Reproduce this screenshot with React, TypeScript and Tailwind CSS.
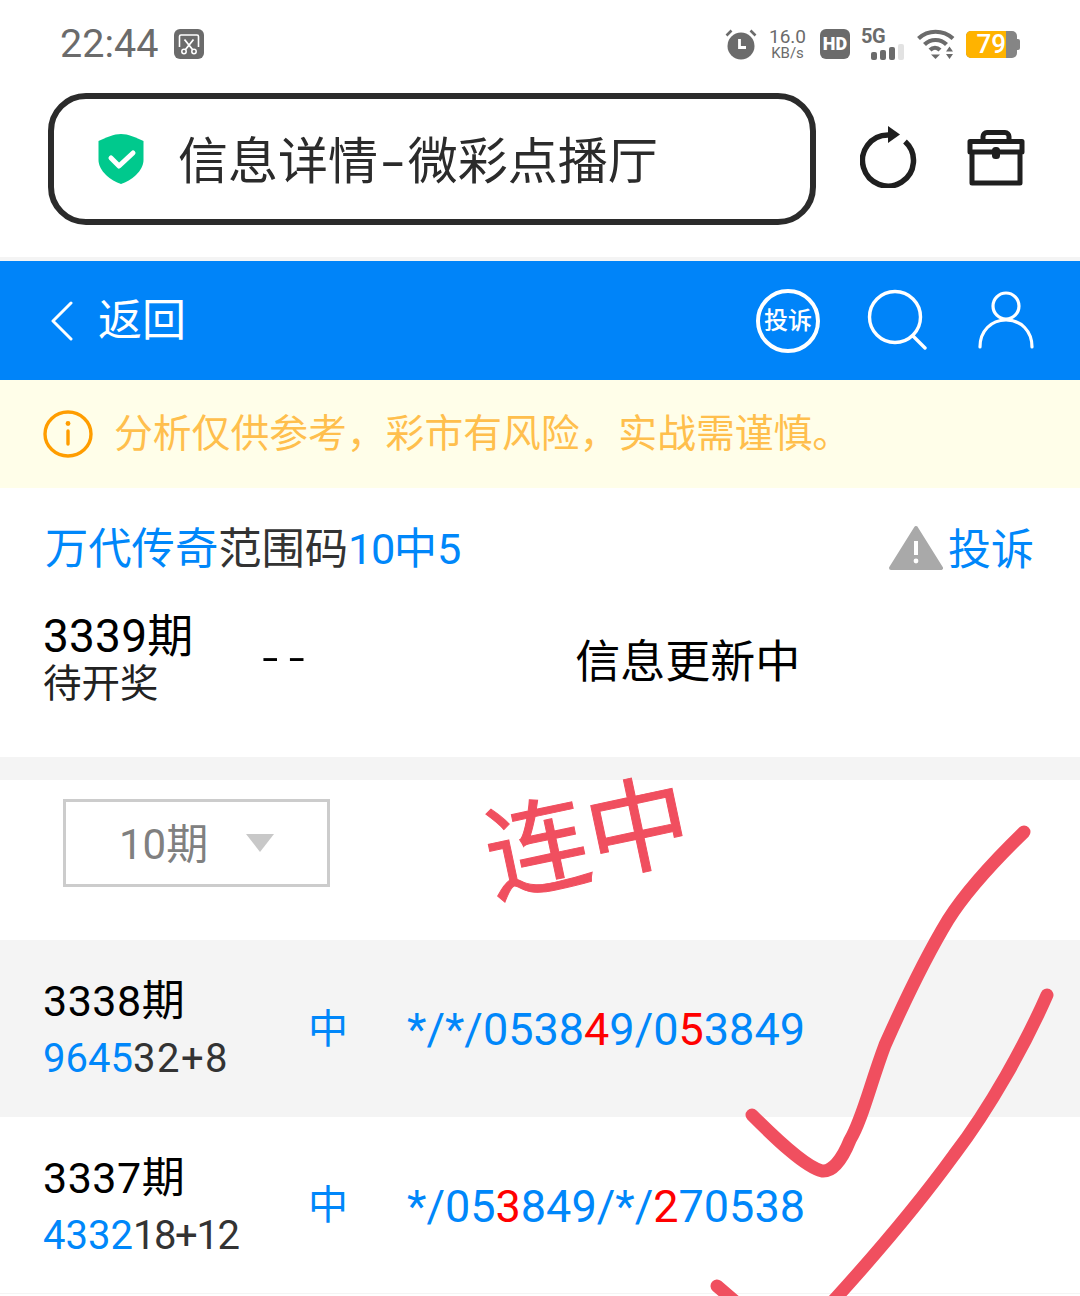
const FONT = 'font-["Roboto","Noto_Sans_CJK_SC",sans-serif]';

// ── Icons ──────────────────────────────────────────────
const Shot = () => (
  <svg width="30" height="30" viewBox="0 0 30 30">
    <rect width="30" height="30" rx="6" fill="#6b6b6b" />
    <path d="M5.500 18V7.500A1.500 1.500 0 0 1 7 6h16A1.500 1.500 0 0 1 24.500 7.500V18" fill="none" stroke="#fff" strokeWidth="1.600" />
    <path d="M10.500 10.500l8 10M19.500 10.500l-8 10" stroke="#fff" strokeWidth="1.800" fill="none" />
    <circle cx="10" cy="22.500" r="2.200" fill="none" stroke="#fff" strokeWidth="1.500" />
    <circle cx="20" cy="22.500" r="2.200" fill="none" stroke="#fff" strokeWidth="1.500" />
  </svg>
);

const Alarm = () => (
  <svg width="32" height="32" viewBox="0 0 32 32" fill="#6b6b6b">
    <circle cx="16" cy="18" r="13.500" />
    <path d="M1.500 7.500L6.500 2.500M30.500 7.500L25.500 2.500" stroke="#6b6b6b" strokeWidth="2.600" />
    <path d="M14.500 11v8.500H21" fill="none" stroke="#fff" strokeWidth="2.800" />
  </svg>
);

const Signal = () => (
  <div className="flex flex-col">
    <span className="text-[20px] leading-[17px] font-bold text-[#6b6b6b] tracking-[-0.5px]">5G</span>
    <div className="flex items-end gap-[3px] ml-[10px] mt-[-1px]">
      <span className="w-[6px] h-[8px] rounded-[2px] bg-[#6b6b6b]" />
      <span className="w-[6px] h-[10px] rounded-[2px] bg-[#6b6b6b]" />
      <span className="w-[6px] h-[13px] rounded-[2px] bg-[#6b6b6b]" />
      <span className="w-[6px] h-[16px] rounded-[2px] bg-[#e2e2e2]" />
    </div>
  </div>
);

const Wifi = () => (
  <svg width="38" height="30" viewBox="0 0 38 30" fill="none" stroke="#6b6b6b" strokeWidth="4.200">
    <path d="M1.500 9.500C11 .5 26 .5 36 9.500" />
    <path d="M7.500 15.500C13.500 9.500 23.500 9.500 29.500 15.500" />
    <path d="M13 21C16 18 20 18 23 21" />
    <path d="M14 25.500h9L18.500 30z" fill="#6b6b6b" stroke="none" />
    <path d="M32.500 17.500l3.500 5h-7zM32.500 30l3.500-5h-7z" fill="#6b6b6b" stroke="none" />
  </svg>
);

const Battery = () => (
  <div className="flex items-center">
    <div className="w-[51px] h-[27px] rounded-[5px] overflow-hidden flex bg-[#858585]">
      <div className="w-[40px] bg-[#ffb300] flex items-center justify-end">
        <span className="text-[26px] leading-none font-medium text-white">79</span>
      </div>
    </div>
    <span className="w-[3px] h-[11px] bg-[#858585] rounded-r-[2px]" />
  </div>
);

const Shield = () => (
  <svg width="46" height="50" viewBox="0 0 46 50">
    <path d="M23 0C30 0 38 3.500 45.500 7V26C45.500 37 33 47 23 50C13 47 .5 37 .5 26V7C8 3.500 16 0 23 0Z" fill="#00c98d" />
    <path d="M13 24l8 8 14-13" fill="none" stroke="#fff" strokeWidth="5" strokeLinecap="round" strokeLinejoin="round" />
  </svg>
);

const Reload = () => (
  <svg width="58" height="62" viewBox="0 0 58 62" fill="none" stroke="#1f1f1f" strokeWidth="5.500">
    <path d="M45 15.500A25.500 25.500 0 1 1 28 9" />
    <path d="M28 0l12 8.500-12 8.500z" fill="#1f1f1f" stroke="none" />
  </svg>
);

const Toolbox = () => (
  <svg width="58" height="56" viewBox="0 0 58 56" fill="none" stroke="#1f1f1f" strokeWidth="5" strokeLinejoin="round">
    <path d="M16 11V6.500A4 4 0 0 1 20 2.500H38A4 4 0 0 1 42 6.500V11" />
    <path d="M3 11.500H55V22H3zM5 22V53H53V22" />
    <rect x="25" y="17" width="8" height="12" rx="3.500" fill="#1f1f1f" stroke="none" />
  </svg>
);

const Search = () => (
  <svg width="60" height="62" viewBox="0 0 60 62" fill="none" stroke="#fff" strokeWidth="3.400" strokeLinecap="round">
    <circle cx="28" cy="28" r="25.500" />
    <path d="M46 47l12 12" />
  </svg>
);

const User = () => (
  <svg width="56" height="58" viewBox="0 0 56 58" fill="none" stroke="#fff" strokeWidth="3.200" strokeLinecap="round">
    <circle cx="28" cy="15" r="13" />
    <path d="M2 56C2 40 13 29 28 29S54 40 54 56" />
  </svg>
);

const Info = () => (
  <svg width="50" height="48" viewBox="0 0 50 48" fill="none" stroke="#ff9d00" strokeWidth="3.400">
    <ellipse cx="25" cy="24" rx="23" ry="22" />
    <path d="M25 21v13" strokeLinecap="round" />
    <circle cx="25" cy="13.500" r="2.400" fill="#ff9d00" stroke="none" />
  </svg>
);

const Warn = () => (
  <svg width="54" height="46" viewBox="0 0 54 46">
    <path d="M27 3L52 43H2Z" fill="#a9a9a9" stroke="#a9a9a9" strokeWidth="4" strokeLinejoin="round" />
    <path d="M27 16v14" stroke="#fff" strokeWidth="4" />
    <circle cx="27" cy="36" r="2.400" fill="#fff" />
  </svg>
);

// ── Data ───────────────────────────────────────────────
const ROWS = [
  {
    issue: '3338期', head: '9645', tail: '32+8', gray: true, tailClass: 'tracking-[1.5px]',
    code: [['*/*/0538'], ['4', 'r'], ['9/0'], ['5', 'r'], ['3849']],
  },
  {
    issue: '3337期', head: '4332', tail: '18+12', gray: false, tailClass: 'tracking-[-1.4px]',
    code: [['*/05'], ['3', 'r'], ['849/*/'], ['2', 'r'], ['70538']],
  },
];

export default function App() {
  return (
    <div className={`relative w-[1080px] h-[1296px] overflow-hidden bg-white ${FONT}`}>
      {/* status bar */}
      <div className="h-[90px] flex items-center pl-[60px] pr-[60px] pb-[2px]">
        <span className="text-[39.500px] leading-none text-[#6b6b6b]">22:44</span>
        <span className="ml-[16px] flex"><Shot /></span>
        <div className="ml-auto flex items-center">
          <Alarm />
          <div className="ml-[12px] flex flex-col items-center text-[#6b6b6b] leading-none">
            <span className="text-[19px] leading-[19px]">16.0</span>
            <span className="text-[15px] leading-[15px]">KB/s</span>
          </div>
          <div className="ml-[14px] w-[30px] h-[30px] rounded-[6px] bg-[#6b6b6b] flex items-center justify-center">
            <span className="text-[18px] font-black text-white leading-none">HD</span>
          </div>
          <div className="ml-[11px]"><Signal /></div>
          <div className="ml-[13px] flex"><Wifi /></div>
          <div className="ml-[11px]"><Battery /></div>
        </div>
      </div>

      {/* address row */}
      <div className="h-[171px] flex items-start pl-[48px] pt-[3px] border-b-[4px] border-[#f4f4f4]">
        <div className="w-[768px] h-[132px] rounded-[38px] border-[6px] border-[#2b2b2b] flex items-center pl-[44px]">
          <Shield />
          <span className="ml-[34px] mt-[5px] text-[50px] leading-none text-[#2b2b2b] whitespace-nowrap">
            信息详情<span className="inline-block mx-[8px] scale-x-[1.6]">-</span>微彩点播厅
          </span>
        </div>
        <div className="ml-[44px] mt-[33px] flex"><Reload /></div>
        <div className="ml-[49px] mt-[37px] flex"><Toolbox /></div>
      </div>

      {/* blue header */}
      <div className="h-[119px] bg-[#0084f9] flex items-center pl-[50px] pr-[46px] text-white">
        <svg width="24" height="40" viewBox="0 0 24 40" fill="none" stroke="#fff" strokeWidth="3" strokeLinecap="round" strokeLinejoin="round">
          <path d="M21 2L3 20l18 18" />
        </svg>
        <span className="ml-[24px] text-[44px] leading-none">返回</span>
        <div className="ml-auto w-[64px] h-[64px] rounded-full border-[4px] border-white flex items-center justify-center">
          <span className="text-[24px] font-medium leading-none whitespace-nowrap">投诉</span>
        </div>
        <div className="ml-[47px] mb-[2px] flex"><Search /></div>
        <div className="ml-[51px] mb-[2px] flex"><User /></div>
      </div>

      {/* notice */}
      <div className="h-[108px] bg-[#fffee9] flex items-center pl-[43px]">
        <Info />
        <span className="ml-[21px] text-[38.800px] leading-none text-[#ffbf4d] whitespace-nowrap">分析仅供参考，彩市有风险，实战需谨慎。</span>
      </div>

      {/* title */}
      <div className="h-[122px] flex items-center pl-[45px] pr-[46px] pt-[2px] text-[#0087fa]">
        <span className="text-[43.300px] leading-none whitespace-nowrap">
          万代传奇<span className="text-[#333]">范围码</span><span className="tracking-[-1.500px]">10</span>中5
        </span>
        <div className="ml-auto flex items-center">
          <span className="mb-[4px] flex"><Warn /></span>
          <span className="ml-[5px] text-[43px] leading-none">投诉</span>
        </div>
      </div>

      {/* current issue */}
      <div className="h-[147px] flex pl-[43px] text-black">
        <div className="w-[219px] flex flex-col">
          <span className="text-[46px] leading-[52px] tracking-[0.200px]">3339期</span>
          <span className="text-[38.500px] leading-[44px] text-[#222]">待开奖</span>
        </div>
        <span className="mt-[22px] text-[58px] leading-[52px] font-light tracking-[10px]">--</span>
        <span className="ml-[260px] mt-[27px] text-[45px] leading-[52px] whitespace-nowrap">信息更新中</span>
      </div>

      <div className="h-[23px] bg-[#f4f4f4]" />

      {/* select */}
      <div className="h-[160px] pl-[63px] pt-[19px]">
        <div className="w-[267px] h-[88px] border-[3px] border-[#cccccc] flex items-center pl-[53px]">
          <span className="mt-[3px] text-[42px] leading-none text-[#808080]">10期</span>
          <span className="ml-[38px] w-0 h-0 border-x-[14px] border-x-transparent border-t-[18px] border-t-[#c8c8c8]" />
        </div>
      </div>

      {/* history */}
      {ROWS.map(row => (
        <div key={row.issue} className={`h-[177px] flex items-center pl-[43px] ${row.gray ? 'bg-[#f4f4f4]' : 'bg-white border-b border-[#f4f4f4]'}`}>
          <div className="w-[265px] flex flex-col mt-[3px]">
            <span className="text-[43px] leading-[56px] text-black tracking-[0.500px]">{row.issue}</span>
            <span className="mt-[2px] text-[40px] leading-[56px] text-[#333] whitespace-nowrap">
              <span className="text-[#0087fa]">{row.head}</span>
              <span className={row.tailClass}>{row.tail}</span>
            </span>
          </div>
          <span className="w-[99px] mt-[2px] text-[40px] leading-none text-[#0087fa]">中</span>
          <span className="mt-[2px] text-[45px] leading-none text-[#0087fa] whitespace-nowrap">
            {row.code.map(([text, red], i) => (
              <span key={i} className={red ? 'text-[#ff0000]' : ''}>{text}</span>
            ))}
          </span>
        </div>
      ))}

      {/* hand-drawn annotation */}
      <span className="absolute left-[485px] top-[780px] text-[103px] leading-[120px] text-[#f04f5f] [-webkit-text-stroke:1px_#f04f5f] -rotate-12 whitespace-nowrap">连中</span>
      <svg className="absolute left-0 top-0 pointer-events-none" width="1080" height="1296" viewBox="0 0 1080 1296" fill="none" stroke="#f04f5f" strokeWidth="13" strokeLinecap="round" strokeLinejoin="round">
        <path d="M1024 832C990 865 965 893 948 920C925 958 905 1000 885 1045C870 1085 862 1120 850 1140C842 1160 832 1172 822 1171C805 1167 775 1138 752 1115" />
        <path d="M1047 995C1025 1045 990 1108 954 1155C925 1195 880 1250 825 1310" />
        <path d="M717 1286L745 1310" />
      </svg>
    </div>
  );
}
